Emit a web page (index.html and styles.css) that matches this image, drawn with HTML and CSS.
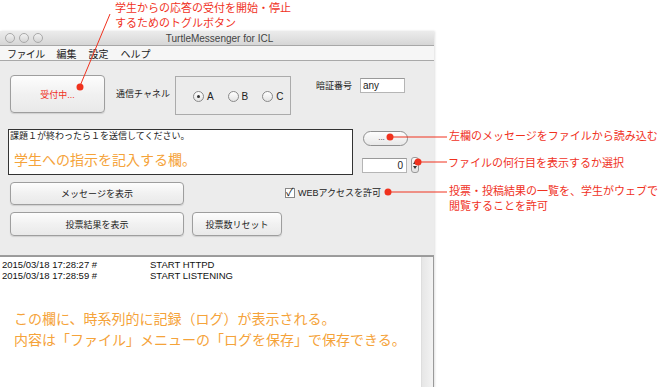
FILE: index.html
```html
<!DOCTYPE html>
<html lang="ja">
<head>
<meta charset="UTF-8">
<title>TurtleMessenger for ICL</title>
<link rel="stylesheet" href="styles.css">
</head>
<body>
<div class="page">
    <div class="window">
        <div class="titlebar">
            <div class="lights"><span></span><span></span><span></span></div>
            <div class="title">TurtleMessenger for ICL</div>
        </div>
        <div class="menubar">
            <span class="menu-file">ファイル</span>
            <span class="menu-edit">編集</span>
            <span class="menu-set">設定</span>
            <span class="menu-help">ヘルプ</span>
        </div>
        <div class="content">
            <div class="row-top">
                <div class="btn toggle">受付中...</div>
                <span class="label ch-label">通信チャネル</span>
                <div class="radio-box">
                    <div class="radio-item"><span class="radio on"></span>A</div>
                    <div class="radio-item"><span class="radio"></span>B</div>
                    <div class="radio-item"><span class="radio"></span>C</div>
                </div>
                <div class="pin">
                    <span class="label">暗証番号</span>
                    <div class="field pin-field">any</div>
                </div>
            </div>
            <div class="row-msg">
                <div class="textarea">
                    <div class="ta-text">課題１が終わったら１を送信してください。</div>
                    <div class="note-orange ta-note">学生への指示を記入する欄。</div>
                </div>
                <div class="side">
                    <div class="pill">...</div>
                    <div class="spin">
                        <div class="field num">0</div>
                        <div class="stepper"><i class="up"></i><i class="down"></i></div>
                    </div>
                </div>
            </div>
            <div class="row-btns">
                <div class="btn wide">メッセージを表示</div>
                <label class="check"><span class="box">&#10003;</span>WEBアクセスを許可</label>
            </div>
            <div class="row-btns second">
                <div class="btn wide">投票結果を表示</div>
                <div class="btn reset">投票数リセット</div>
            </div>
        </div>
        <div class="log">
            <div class="log-body">
                <div class="log-line"><span class="log-time">2015/03/18 17:28:27 #</span><span>START HTTPD</span></div>
                <div class="log-line"><span class="log-time">2015/03/18 17:28:59 #</span><span>START LISTENING</span></div>
                <div class="log-notes">
                    <div class="note-orange">この欄に、時系列的に記録（ログ）が表示される。</div>
                    <div class="note-orange">内容は「ファイル」メニューの「ログを保存」で保存できる。</div>
                </div>
            </div>
            <div class="scrollbar"></div>
        </div>
    </div>

    <!-- callouts -->
    <div class="callout c-toggle">学生からの応答の受付を開始・停止<br>するためのトグルボタン</div>
    <div class="callout c-file">左欄のメッセージをファイルから読み込む</div>
    <div class="callout c-line">ファイルの何行目を表示するか選択</div>
    <div class="callout c-web">投票・投稿結果の一覧を、学生がウェブで<br>閲覧することを許可</div>
    <svg class="leaders" width="658" height="387" viewBox="0 0 658 387">
        <g stroke="#f0321e" stroke-width="1" fill="none">
            <line x1="110" y1="14" x2="80" y2="86"/>
            <line x1="390" y1="137" x2="447" y2="137"/>
            <line x1="418" y1="162" x2="447" y2="162"/>
            <line x1="388" y1="192" x2="447" y2="192"/>
        </g>
        <g fill="#f0321e">
            <circle cx="80" cy="87" r="3.5"/>
            <circle cx="390" cy="137" r="3.5"/>
            <circle cx="418" cy="162" r="3.5"/>
            <circle cx="388" cy="192" r="3.5"/>
        </g>
    </svg>
</div>
</body>
</html>
```

FILE: styles.css
```css
body {
    margin: 0;
    background: #fff;
    font-family: "Liberation Sans", "Noto Sans CJK JP", sans-serif;
    color: #222;
}
.page {
    position: relative;
    width: 658px;
    height: 387px;
    overflow: hidden;
}
.window {
    width: 434px;
    margin-top: 31px;
    background: #ececec;
    box-shadow: 1px 0 2px rgba(0, 0, 0, 0.12);
}
.titlebar {
    height: 14px;
    display: flex;
    align-items: center;
    background: linear-gradient(#ececec, #d6d6d6);
    border-bottom: 1px solid #a7a7a7;
    border-radius: 4px 4px 0 0;
}
.lights {
    display: flex;
    gap: 4px;
    margin-left: 5px;
}
.lights span {
    box-sizing: border-box;
    width: 10px;
    height: 10px;
    border-radius: 50%;
    border: 1px solid #a9a9a9;
    background: linear-gradient(#f2f2f2, #d4d4d4);
}
.title {
    flex: 1;
    text-align: center;
    font-size: 10px;
    color: #444;
    margin-right: 38px;
}
.menubar {
    height: 14px;
    display: flex;
    align-items: center;
    font-size: 10px;
    color: #222;
    background: #f6f6f6;
    border-bottom: 1px solid #a9a9a9;
    padding-left: 7px;
}
.menubar span { margin-right: 12px; }
.menu-file { letter-spacing: -0.6px; }

.content {
    padding-bottom: 19px;
    border-bottom: 1px solid #9d9d9d;
}
.label {
    font-size: 9px;
    color: #222;
    line-height: 12px;
}
.btn {
    box-sizing: border-box;
    display: flex;
    align-items: center;
    justify-content: center;
    font-size: 9px;
    color: #222;
    border: 1px solid #9e9e9e;
    border-radius: 4px;
    background: linear-gradient(#fdfdfd, #f1f1f1 50%, #e9e9e9);
    box-shadow: 0 1px 1px rgba(0, 0, 0, 0.12);
}
.row-top {
    display: flex;
    align-items: flex-start;
    padding-top: 14px;
    height: 40px;
}
.toggle {
    width: 95px;
    height: 38px;
    margin-left: 10px;
    color: #f0321e;
}
.ch-label {
    margin-left: 11px;
    margin-top: 13px;
}
.radio-box {
    box-sizing: border-box;
    width: 116px;
    height: 39px;
    margin-left: 5px;
    margin-top: 1px;
    border: 1px solid #ababab;
    display: flex;
    align-items: center;
    padding-left: 17px;
    padding-top: 2px;
    gap: 14px;
}
.radio-item {
    display: flex;
    align-items: center;
    font-size: 10px;
    gap: 3px;
}
.radio {
    box-sizing: border-box;
    width: 11px;
    height: 11px;
    border-radius: 50%;
    border: 1px solid #8a8a8a;
    background: linear-gradient(#fff, #e4e4e4);
    display: flex;
    align-items: center;
    justify-content: center;
}
.radio.on::after {
    content: "";
    width: 3px;
    height: 3px;
    border-radius: 50%;
    background: #333;
}
.pin {
    display: flex;
    align-items: flex-start;
    margin-left: 25px;
}
.pin .label { margin-top: 5px; }
.field {
    box-sizing: border-box;
    background: #fff;
    border: 1px solid #b5b5b5;
    border-top-color: #999;
    height: 15px;
    font-size: 10px;
    line-height: 13px;
}
.pin-field {
    width: 45px;
    margin-left: 8px;
    margin-top: 3px;
    padding-left: 2px;
}

.row-msg {
    display: flex;
    margin-top: 14px;
}
.textarea {
    box-sizing: border-box;
    width: 345px;
    height: 46px;
    margin-left: 8px;
    border: 1px solid #333;
    background: #fff;
}
.ta-text {
    font-size: 9px;
    line-height: 11px;
    padding-top: 1px;
    padding-left: 1px;
}
.note-orange {
    color: #f5a33a;
    font-size: 14px;
    font-family: "Noto Sans CJK JP", sans-serif;
}
.ta-note {
    margin-top: 9px;
    margin-left: 5px;
    line-height: 16px;
}
.side {
    margin-left: 9px;
    display: flex;
    flex-direction: column;
}
.pill {
    box-sizing: border-box;
    width: 45px;
    height: 15px;
    margin-top: 2px;
    margin-left: 1px;
    padding-right: 8px;
    border: 1px solid #8f8f8f;
    border-radius: 8px;
    background: linear-gradient(#fdfdfd, #e8e8e8);
    font-size: 8px;
    text-align: center;
    line-height: 11px;
}
.spin {
    display: flex;
    align-items: center;
    margin-top: 11px;
}
.num {
    width: 45px;
    text-align: right;
    padding-right: 3px;
}
.stepper {
    box-sizing: border-box;
    width: 8px;
    height: 16px;
    margin-left: 4px;
    border: 1px solid #999;
    border-radius: 3px;
    background: linear-gradient(#fafafa, #e2e2e2);
    display: flex;
    flex-direction: column;
    align-items: center;
    justify-content: space-around;
    padding: 2px 0;
}
.stepper i {
    width: 0;
    height: 0;
    border-left: 2px solid transparent;
    border-right: 2px solid transparent;
}
.stepper .up { border-bottom: 3px solid #333; }
.stepper .down { border-top: 3px solid #333; }

.row-btns {
    display: flex;
    align-items: flex-start;
    margin-top: 7px;
    padding-left: 10px;
}
.wide {
    width: 174px;
    height: 23px;
}
.second .wide { height: 24px; }
.reset {
    width: 90px;
    height: 24px;
    margin-left: 8px;
}
.check {
    display: flex;
    align-items: center;
    font-size: 9px;
    margin-left: 101px;
    margin-top: 4px;
}
.box {
    box-sizing: border-box;
    width: 10px;
    height: 10px;
    border: 1px solid #888;
    background: #fff;
    font-size: 11px;
    line-height: 7px;
    margin-right: 3px;
    color: #222;
}

.log {
    display: flex;
    height: 131px;
    background: #fff;
    border-top: 1px solid #9a9a9a;
    border-right: 1px solid #9a9a9a;
}
.log-body {
    flex: 1;
    padding-top: 2px;
    padding-left: 2px;
}
.log-line {
    display: flex;
    font-size: 9.5px;
    line-height: 11px;
    color: #111;
}
.log-time { width: 148px; }
.log-notes {
    margin-top: 27px;
    margin-left: 12px;
    line-height: 21px;
}
.scrollbar {
    width: 11px;
    background: linear-gradient(90deg, #e6e6e6, #f3f3f3);
    border-left: 1px solid #dedede;
}

.callout {
    position: absolute;
    color: #f0321e;
    font-size: 11px;
    line-height: 15px;
    font-family: "Noto Sans CJK JP", sans-serif;
}
.c-toggle { left: 115px; top: 0; }
.c-file { left: 449px; top: 128px; }
.c-line { left: 448px; top: 155px; }
.c-web { left: 449px; top: 183px; }
.leaders {
    position: absolute;
    left: 0;
    top: 0;
    pointer-events: none;
}
```
